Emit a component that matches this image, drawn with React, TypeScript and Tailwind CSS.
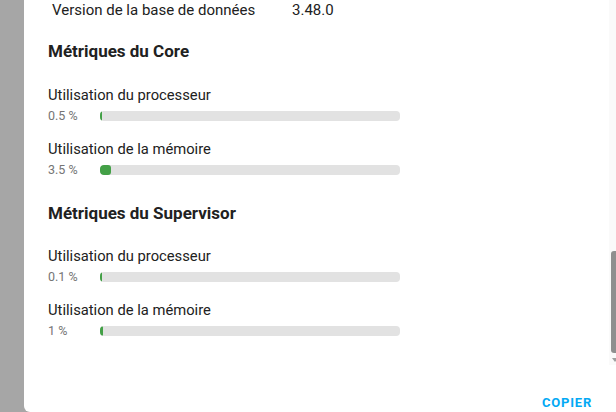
const metrics = [
  {
    title: "Métriques du Core",
    rows: [
      { label: "Utilisation du processeur", value: "0.5 %", percent: 0.5 },
      { label: "Utilisation de la mémoire", value: "3.5 %", percent: 3.5 },
    ],
  },
  {
    title: "Métriques du Supervisor",
    rows: [
      { label: "Utilisation du processeur", value: "0.1 %", percent: 0.1 },
      { label: "Utilisation de la mémoire", value: "1 %", percent: 1 },
    ],
  },
];

function Bar({ percent }: { percent: number }) {
  return (
    <div className="h-[10px] w-[300px] overflow-hidden rounded-[4px] bg-[#e2e2e2]">
      <div
        className="h-full rounded-[3px] bg-[#43a047]"
        style={{ width: `${Math.max(percent * 3, 1.5)}px` }}
      />
    </div>
  );
}

export default function App() {
  return (
    <div className="flex h-[412px] w-[616px] overflow-hidden bg-[#a6a6a6] font-['Roboto',sans-serif] text-[#212121]">
      <div className="w-[24px] shrink-0" />
      <div className="flex flex-1 flex-col rounded-bl-[6px] bg-white">
        <div className="flex h-[365px]">
          {/* --- scrollable content --- */}
          <div className="flex-1 pl-[24px]">
            <div className="flex h-[20px] items-center text-[15px] leading-[20px]">
              <span className="w-[244px] pl-[4px]">Version de la base de données</span>
              <span>3.48.0</span>
            </div>

            {metrics.map((section, i) => (
              <div key={section.title} className={i === 0 ? "mt-[19px]" : "mt-[20px]"}>
                <h3 className="text-[17px] font-bold leading-[24px]">{section.title}</h3>
                {section.rows.map((row, j) => (
                  <div
                    key={row.label}
                    className={j === 0 ? (i === 0 ? "mt-[22px]" : "mt-[21px]") : "mt-[12px]"}
                  >
                    <div className="text-[14.75px] leading-[20px]">{row.label}</div>
                    <div className="flex h-[22px] items-center">
                      <span className="w-[52px] text-[12.5px] text-[#757575]">{row.value}</span>
                      <Bar percent={row.percent} />
                    </div>
                  </div>
                ))}
              </div>
            ))}
          </div>

          {/* --- scrollbar --- */}
          <div className="relative w-[7px] bg-[#fafafa]">
            <div className="absolute left-[2px] right-0 top-[251px] h-[102px] rounded-l-[3px] bg-[#8f8f8f]" />
            <div className="absolute left-[3px] top-[358px] h-0 w-0 border-x-[3px] border-t-[4px] border-x-transparent border-t-[#a0a0a0]" />
          </div>
        </div>

        <div className="flex flex-1 items-end justify-end pb-[1px] pr-[24px]">
          <button className="text-[13px] font-bold leading-[16px] tracking-[0.06em] text-[#03a9f4]">
            COPIER
          </button>
        </div>
      </div>
    </div>
  );
}
